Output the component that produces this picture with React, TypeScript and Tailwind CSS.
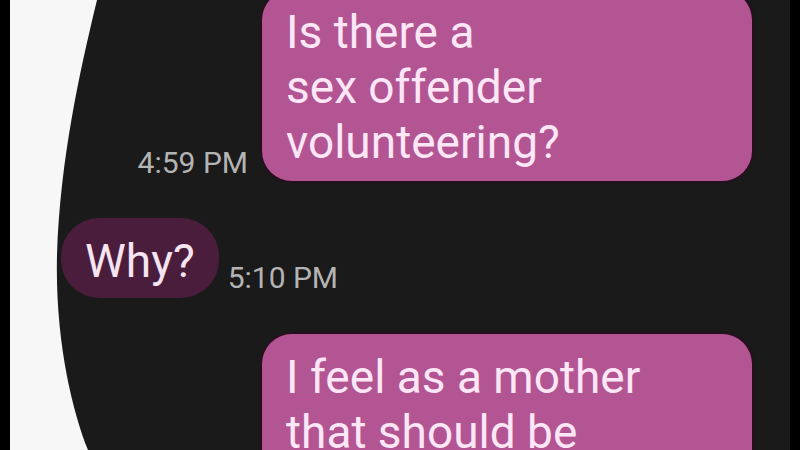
export default function App() {
  return (
    <div className="w-[800px] h-[450px] overflow-hidden bg-black flex font-['Roboto',sans-serif]">
      {/* left photo edge */}
      <div className="w-[10px] shrink-0 bg-black" />

      <main className="relative flex-1 bg-[#1a1a1a]">
        {/* white curved edge of the photographed screen */}
        <svg className="absolute left-0 top-0" width="100" height="450" viewBox="0 0 100 450">
          <path d="M0 0 H87 C70 70 50 160 47 255 C45 340 62 410 78 450 H0 Z" fill="#f7f7f7" />
        </svg>

        <div className="relative flex flex-col -mt-[10px] pr-[38px]">
          {/* Outgoing 1 */}
          <div className="flex justify-end items-end gap-[14px]">
            <span className="mb-[3px] text-[30px] leading-none text-[#b4b4b4]">4:59 PM</span>
            <div className="w-[490px] rounded-[30px] bg-[#b25592] pl-[24px] pr-4 pt-[15px] pb-[11px] text-[46px] leading-[55px] text-[#fde6f6] shadow-[0_0_2px_1px_rgba(55,5,38,0.9)]">
              <p>Is there a</p>
              <p>sex offender</p>
              <p>volunteering?</p>
            </div>
          </div>

          {/* Incoming */}
          <div className="mt-[37px] pl-[51px] flex items-end gap-[9px]">
            <div className="rounded-[38px] bg-[#4b1d3c] px-[24px] pt-[16px] pb-[9px] text-[46px] leading-[55px] text-[#f6e4f0]">
              Why?
            </div>
            <span className="mb-[5px] text-[30px] leading-none text-[#b4b4b4]">5:10 PM</span>
          </div>

          {/* Outgoing 2 */}
          <div className="mt-[36px] flex justify-end">
            <div className="w-[490px] h-[140px] rounded-t-[30px] bg-[#b25592] pl-[24px] pr-4 pt-[16px] text-[46px] leading-[55px] text-[#fde6f6] shadow-[0_0_2px_1px_rgba(55,5,38,0.9)]">
              <p>I feel as a mother</p>
              <p>that should be</p>
            </div>
          </div>
        </div>
      </main>

      <div className="w-[10px] shrink-0 bg-black" />
    </div>
  );
}
